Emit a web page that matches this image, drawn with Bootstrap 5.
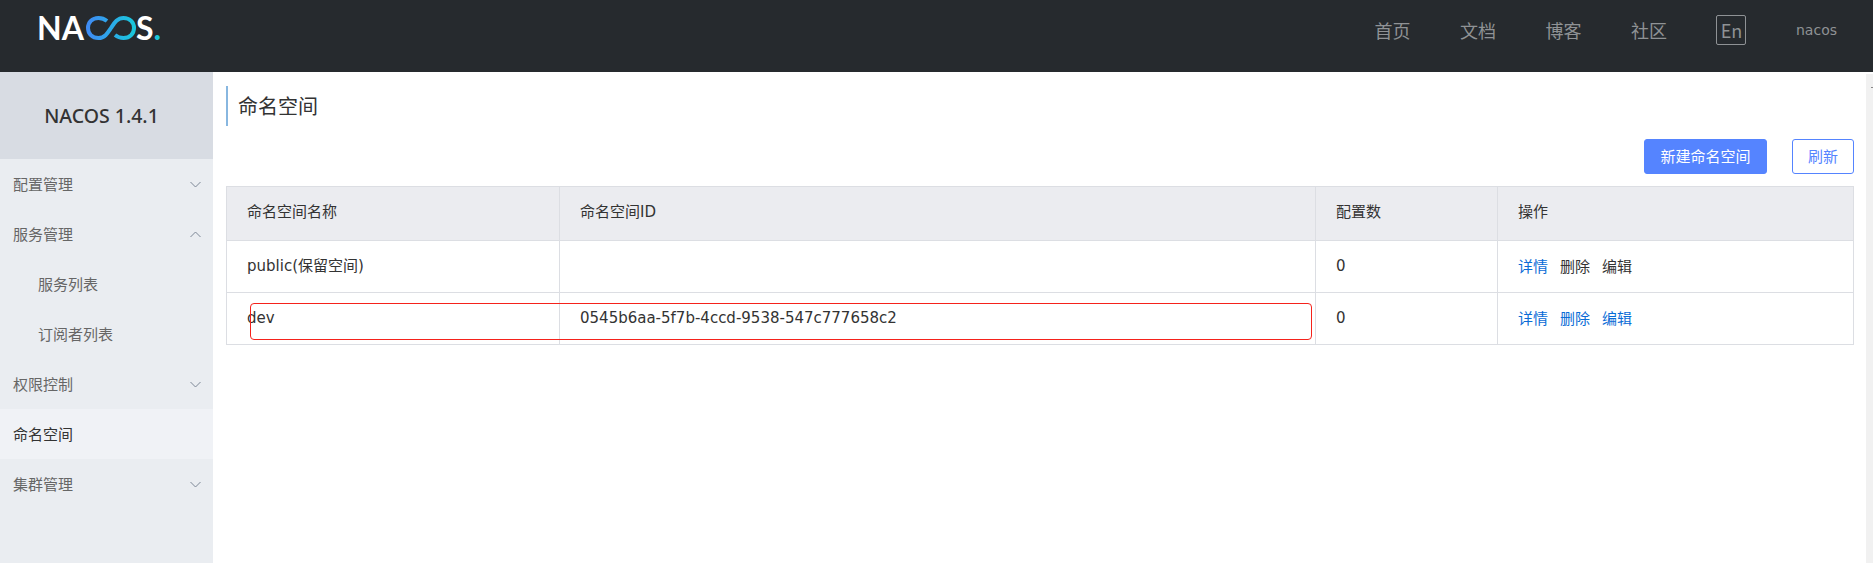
<!DOCTYPE html>
<html lang="en">
<head>
  <meta charset="UTF-8" />
  <meta name="viewport" content="width=device-width, initial-scale=1" />
  <title>Nacos</title>
  <link href="https://cdn.jsdelivr.net/npm/bootstrap@5.3.0/dist/css/bootstrap.min.css" rel="stylesheet" />
  <style>
    html, body {
      height: 100%;
      overflow: hidden;
    }
    body {
      font-family: "DejaVu Sans", "Noto Sans CJK SC", sans-serif;
      font-size: 14px;
      color: #333;
      background-color: #fff;
    }
    .top-bar {
      height: 72px;
      background-color: #262a2e;
      padding: 0 36px 12px 37px;
    }
    .logo-word {
      font-family: "Lato", "Liberation Sans", sans-serif;
      font-weight: 700;
      font-size: 32px;
      line-height: 1;
      color: #fff;
      margin-bottom: 5px;
    }
    .logo-a { margin-right: 1px; letter-spacing: 1px; }
    .logo-dot { color: #1cc6d8; }
    .top-links {
      color: #8f9295;
      font-family: "Noto Sans CJK SC", sans-serif;
      font-size: 18px;
      gap: 49.5px;
    }
    .lang-box {
      width: 30px;
      height: 30px;
      border: 1px solid #8f9295;
      border-radius: 2px;
      font-size: 18px;
    }
    .top-user {
      font-family: "DejaVu Sans", sans-serif;
      font-size: 14px;
    }
    .page-wrap {
      height: 491px;
    }
    .side-nav {
      width: 213px;
      background-color: #eaedf1;
      font-family: "Noto Sans CJK SC", sans-serif;
      font-size: 15px;
    }
    .side-title {
      height: 87px;
      background-color: #d8dce3;
      font-family: "Noto Sans", sans-serif;
      font-weight: 500;
      font-size: 19.5px;
      color: #333;
      padding-right: 10px;
    }
    .side-item {
      height: 50px;
      padding: 0 12px 0 13px;
      color: #666;
    }
    .side-item.sub-item { padding-left: 38px; }
    .side-item.picked {
      background-color: #f0f2f6;
      color: #333;
    }
    .main-area {
      padding: 14px 12px 0 13px;
      position: relative;
    }
    .page-title {
      height: 40px;
      border-left: 2px solid #88b7e0;
      padding-left: 10px;
      font-family: "Noto Sans CJK SC", sans-serif;
      font-size: 20px;
      font-weight: 400;
      color: #333;
      margin-bottom: 13px;
    }
    .tool-row {
      height: 35px;
      gap: 25px;
      margin-bottom: 12px;
      font-family: "Noto Sans CJK SC", sans-serif;
    }
    .btn-fill, .btn-line {
      border-radius: 3px;
      height: 35px;
      font-size: 15px;
      padding: 0;
      border: 1px solid #5584ff;
    }
    .btn-fill {
      width: 123px;
      background-color: #5584ff;
      color: #fff;
    }
    .btn-line {
      width: 62px;
      background-color: #fff;
      color: #5584ff;
    }
    .ns-table {
      width: 1628px;
      table-layout: fixed;
      margin: 0;
      font-size: 15px;
      color: #333;
      --bs-border-color: #dcdee3;
    }
    .ns-name-col { width: 333px; }
    .ns-id-col { width: 756px; }
    .ns-count-col { width: 182px; }
    .ns-table th, .ns-table td {
      padding: 0 20px 1px 20px;
      vertical-align: middle;
      font-weight: 400;
    }
    .ns-table thead th {
      height: 54px;
      padding-bottom: 4px;
      background-color: #ebecf0;
    }
    .ns-table tbody td { height: 52px; }
    .cjk-run {
      font-family: "Noto Sans CJK SC", sans-serif;
    }
    .op-link {
      color: #0a6cd6;
      text-decoration: none;
      margin-right: 12px;
    }
    .op-plain { color: #333; }
    .mark-box {
      position: absolute;
      left: 37px;
      top: 231px;
      width: 1062px;
      height: 37px;
      border: 1px solid #f5221b;
      border-radius: 4px;
    }
    .scroll-strip {
      width: 7px;
      background-color: #f1f1f1;
      margin-top: 2px;
      position: relative;
    }
    .scroll-tick {
      position: absolute;
      top: 13px;
      right: 0;
      width: 2px;
      height: 1px;
      background-color: #888;
    }
  </style>
</head>
<body>

<header class="top-bar d-flex align-items-center justify-content-between">
  <div class="logo-word d-flex align-items-center">
    <span>N</span><span class="logo-a">A</span>
    <svg width="50" height="24" viewBox="0 0 50 24" fill="none">
      <defs>
        <linearGradient id="logoGrad" x1="0" y1="0" x2="1" y2="0">
          <stop offset="0" stop-color="#3f8cf5" />
          <stop offset="1" stop-color="#19c6dc" />
        </linearGradient>
      </defs>
      <path d="M21 5C18.500 3 16 2 12.500 2C6 2 2 6.500 2 12S6 22 12.500 22C19 22 22 16.500 25 12S31 2 37.500 2C44 2 48 6.500 48 12S44 22 37.500 22C34 22 31.500 21 29 19" stroke="url(#logoGrad)" stroke-width="4" />
    </svg>
    <span>S<span class="logo-dot">.</span></span>
  </div>
  <nav class="top-links d-flex align-items-center">
    <span>首页</span>
    <span>文档</span>
    <span>博客</span>
    <span>社区</span>
    <span class="lang-box d-flex align-items-center justify-content-center">En</span>
    <span class="top-user">nacos</span>
  </nav>
</header>

<div class="page-wrap d-flex">
  <aside class="side-nav flex-shrink-0">
    <div class="side-title d-flex align-items-center justify-content-center">NACOS 1.4.1</div>
    <div class="side-item d-flex align-items-center justify-content-between">
      <span>配置管理</span>
      <svg width="11" height="7" viewBox="0 0 11 7" fill="none" stroke="#7d8796" stroke-width="1"><path d="M.5 1l5 5 5-5" /></svg>
    </div>
    <div class="side-item d-flex align-items-center justify-content-between">
      <span>服务管理</span>
      <svg width="11" height="7" viewBox="0 0 11 7" fill="none" stroke="#7d8796" stroke-width="1"><path d="M.5 6l5-5 5 5" /></svg>
    </div>
    <div class="side-item sub-item d-flex align-items-center">服务列表</div>
    <div class="side-item sub-item d-flex align-items-center">订阅者列表</div>
    <div class="side-item d-flex align-items-center justify-content-between">
      <span>权限控制</span>
      <svg width="11" height="7" viewBox="0 0 11 7" fill="none" stroke="#7d8796" stroke-width="1"><path d="M.5 1l5 5 5-5" /></svg>
    </div>
    <div class="side-item picked d-flex align-items-center">命名空间</div>
    <div class="side-item d-flex align-items-center justify-content-between">
      <span>集群管理</span>
      <svg width="11" height="7" viewBox="0 0 11 7" fill="none" stroke="#7d8796" stroke-width="1"><path d="M.5 1l5 5 5-5" /></svg>
    </div>
  </aside>

  <main class="main-area flex-grow-1">
    <h1 class="page-title d-flex align-items-center">命名空间</h1>
    <div class="tool-row d-flex justify-content-end">
      <button class="btn-fill">新建命名空间</button>
      <button class="btn-line">刷新</button>
    </div>
    <table class="table table-bordered ns-table">
      <colgroup>
        <col class="ns-name-col" />
        <col class="ns-id-col" />
        <col class="ns-count-col" />
        <col />
      </colgroup>
      <thead>
        <tr>
          <th><span class="cjk-run">命名空间名称</span></th>
          <th><span class="cjk-run">命名空间</span>ID</th>
          <th><span class="cjk-run">配置数</span></th>
          <th><span class="cjk-run">操作</span></th>
        </tr>
      </thead>
      <tbody>
        <tr>
          <td>public(<span class="cjk-run">保留空间</span>)</td>
          <td></td>
          <td>0</td>
          <td class="cjk-run"><a class="op-link" href="#">详情</a><span class="op-link op-plain">删除</span><span class="op-link op-plain">编辑</span></td>
        </tr>
        <tr>
          <td>dev</td>
          <td>0545b6aa-5f7b-4ccd-9538-547c777658c2</td>
          <td>0</td>
          <td class="cjk-run"><a class="op-link" href="#">详情</a><a class="op-link" href="#">删除</a><a class="op-link" href="#">编辑</a></td>
        </tr>
      </tbody>
    </table>
    <div class="mark-box"></div>
  </main>

  <div class="scroll-strip flex-shrink-0"><span class="scroll-tick"></span></div>
</div>

<script src="https://cdn.jsdelivr.net/npm/bootstrap@5.3.0/dist/js/bootstrap.bundle.min.js"></script>
</body>
</html>
